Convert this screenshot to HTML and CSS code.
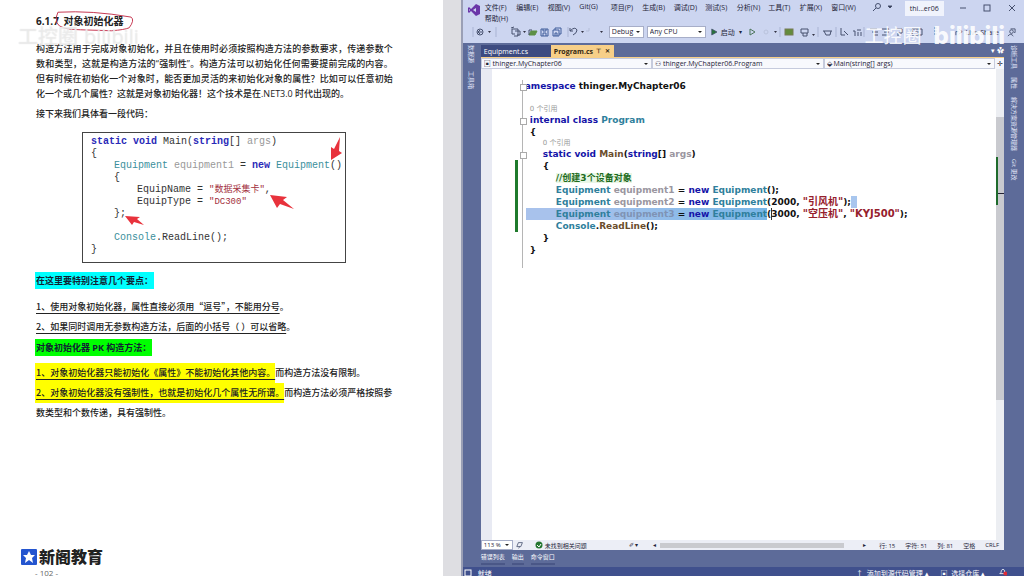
FILE: index.html
```html
<!DOCTYPE html>
<html lang="zh-CN">
<head>
    <meta charset="UTF-8">
    <meta name="viewport" content="width=device-width, initial-scale=1.0">
    <title>对象初始化器</title>
    <link rel="stylesheet" href="styles.css">
</head>
<body>
    <div class="screen">
        <article class="doc">
            <h2>6.1.7 <span class="circled">对象初始化器
                <svg class="pen" viewBox="0 0 82 22"><path d="M3 2 Q38 0 78 7 Q82 10 76 18 Q71 20 58 21 L26 20 Q5 20 2 13 Q0 7 3 2"/></svg></span>
            </h2>
            <p class="text">
                <span class="full">构造方法用于完成对象初始化，并且在使用时必须按照构造方法的参数要求，传递参数个</span>
                <span class="full">数和类型，这就是构造方法的“强制性”。构造方法可以初始化任何需要提前完成的内容。</span>
                <span class="full">但有时候在初始化一个对象时，能否更加灵活的来初始化对象的属性？比如可以任意初始</span>
                <span class="last">化一个或几个属性？这就是对象初始化器！这个技术是在.NET3.0 时代出现的。</span>
            </p>
            <p class="text">接下来我们具体看一段代码：</p>
            <div class="sample">
                <div><b>static</b> <b>void</b> Main(<b>string</b>[] <i>args</i>)</div>
                <div>{</div>
                <div class="in1"><em>Equipment</em> <i>equipment1</i> = <b>new</b> <em>Equipment</em>()</div>
                <div class="in1">{</div>
                <div class="in2">EquipName = <q>"数据采集卡"</q>,</div>
                <div class="in2">EquipType = <q>"DC300"</q></div>
                <div class="in1">};</div>
                <div>&nbsp;</div>
                <div class="in1"><em>Console</em>.ReadLine();</div>
                <div>}</div>
                <svg class="arrows" viewBox="0 0 262 128">
                    <path d="M248 27 L248 14 L251 16 L257 4 L256 18 L259 20 Z"/>
                    <path d="M187 62 L204 64 L200 67 L211 76 L197 71 L194 75 Z"/>
                    <path d="M42 83 L57 84 L54 86 L61 92 L51 89 L49 92 Z"/>
                </svg>
            </div>
            <h3><mark class="cyan">在这里要特别注意几个要点：</mark></h3>
            <p class="point"><u>1、使用对象初始化器，属性直接必须用“逗号”，不能用分号</u>。</p>
            <p class="point"><u>2、如果同时调用无参数构造方法，后面的小括号（ ）可以省略</u>。</p>
            <h3 class="pk"><mark class="green">对象初始化器 PK 构造方法：</mark></h3>
            <p class="point"><mark>1、对象初始化器只能初始化《属性》不能初始化其他内容。</mark>而构造方法没有限制。</p>
            <p class="point"><mark>2、对象初始化器没有强制性，也就是初始化几个属性无所谓。</mark>而构造方法必须严格按照参</p>
            <p class="point">数类型和个数传递，具有强制性。</p>
            <footer>
                <div class="brand">
                    <svg viewBox="0 0 16 16"><rect width="16" height="16" rx="1" fill="#2455cf"/><path d="M8 2 L10 6 L14 6 L11 9 L12 14 L8 11 L4 14 L5 9 L2 6 L6 6 Z" fill="#fff"/></svg>
                    新阁教育
                </div>
                <div class="page">- 102 -</div>
            </footer>
            <div class="ghost">工控圈 <span>bilibili</span></div>
        </article>

        <main class="ide">
            <header>
                <div class="menubar">
                    <svg class="logo" viewBox="0 0 12 12"><path d="M8 0 L12 2 V10 L8 12 L3 7 L1 9 L0 8 V4 L1 3 L3 5 Z M8 4 L5 6 L8 8 Z M1 5 V7 L2 6 Z" fill="#6a36a8" fill-rule="evenodd"/></svg>
                    <nav>
                        <button>文件(F)</button><button>编辑(E)</button><button>视图(V)</button><button>Git(G)</button><button>项目(P)</button><button>生成(B)</button><button>调试(D)</button><button>测试(S)</button><button>分析(N)</button><button>工具(T)</button><button>扩展(X)</button><button>窗口(W)</button><button>帮助(H)</button>
                    </nav>
                    <button class="search" aria-label="搜索"><svg viewBox="0 0 20 10"><circle cx="5" cy="4" r="2.5"/><path d="M3 6 L0 9"/><path d="M15 4h4l-2 2z" fill="#334"/></svg></button>
                    <span class="solution">thi...er06</span>
                    <div class="winbtns">
                        <button aria-label="最小化"><svg viewBox="0 0 8 8"><path d="M1 4H7"/></svg></button>
                        <button aria-label="最大化"><svg viewBox="0 0 8 8"><rect x="1" y="1" width="6" height="6"/></svg></button>
                        <button aria-label="关闭"><svg viewBox="0 0 8 8"><path d="M1 1L7 7M7 1L1 7"/></svg></button>
                    </div>
                </div>
                <div class="toolbar">
                    <svg class="tools-a" viewBox="0 0 132 14">
                        <path d="M2 2V12M25 2V12M97 2V12" stroke="#a9b3d3"/>
                        <circle cx="9" cy="7" r="3"/><path d="M7 7H11M7 7L9 5M7 7L9 9"/>
                        <path d="M17 6h3l-1.500 2zM52 6h3l-1.500 2zM110 6h3l-1.500 2zM129 6h3l-1.500 2z" fill="#334" stroke="none"/>
                        <path d="M41 4H47V11H43M41 4V9H44M44 6H49V10H46M40 3L43 2"/>
                        <path d="M58 10L60 6H66L64 10Z" fill="#5d8f45" stroke="#5d8f45"/><path d="M58 10V5H61"/>
                        <path d="M70 4H77V11H70ZM72 4V6H75V4M72 11V8H75V11" stroke="#3e5d9a"/>
                        <path d="M82 5H88V11H82ZM84 5V3H90V9H88M84 11V8H86V11" stroke="#3e5d9a"/>
                        <path d="M99 3V6H102M99 6Q104 1 106 5Q106 8 102 10"/>
                        <path d="M118 3V6H115" stroke="#b4bdd8"/>
                    </svg>
                    <span class="combo config"><select aria-label="配置"><option>Debug</option></select></span>
                    <span class="combo cpu"><select aria-label="平台"><option>Any CPU</option></select></span>
                    <button class="run"><svg viewBox="0 0 8 8"><path d="M1 0L8 4L1 8Z" fill="#26733a"/></svg>启动<small>▾</small></button>
                    <svg class="tools-b" viewBox="0 0 200 14">
                        <path d="M2 4L7 7L2 10Z" stroke="#4d765c"/><circle cx="18" cy="7" r="2" stroke="#bac3dc"/>
                        <path d="M26 6h3l-1.500 2zM64 9h3l-1.500 2z" fill="#334" stroke="none"/>
                        <path d="M32 2V12M70 2V12M88 2V12M116 2V12" stroke="#a9b3d3"/>
                        <rect x="37" y="4" width="8" height="6" fill="#638b3c" stroke="#777b55"/>
                        <path d="M53 4H60V8H53ZM55 8V11H59V8M76 6L78 10L82 10L83 6M75 6H84M93 3V10H97M96 6L100 10M105 6H107V11M109 5H113M110 7V11M113 7V11"/>
                        <path d="M122 4H129M124 7H130M126 10H130M134 4H141M136 7H141M134 10H140M148 4H154V8H150V11M164 4H174V10H164ZM167 7H171M186 3H189M186 6H189M186 9H189"/>
                    </svg>
                    <button class="share"><svg viewBox="0 0 10 10"><path d="M1 8V4H4M4 1L8 4L4 7"/></svg>Live Share</button>
                    <svg class="person" viewBox="0 0 10 10"><circle cx="5" cy="4" r="2"/><path d="M1 9Q4 5 7 9M4 1H9V5H8"/></svg>
                </div>
            </header>

            <div class="work">
                <aside class="side left"><button>数据源</button><button>工具箱</button></aside>
                <section class="center">
                    <div class="tabs">
                        <button class="tab">Equipment.cs</button>
                        <button class="tab active">Program.cs <span>⊤</span><span>✕</span></button>
                        <span class="tabtools">▾ ✿</span>
                    </div>
                    <div class="navbar">
                        <span class="combo"><select aria-label="项目"><option>▣ thinger.MyChapter06</option></select></span>
                        <span class="combo"><select aria-label="类型"><option>⚇ thinger.MyChapter06.Program</option></select></span>
                        <span class="combo"><select aria-label="成员"><option>⬙ Main(string[] args)</option></select></span>
                        <button class="split" aria-label="拆分">✛</button>
                    </div>
                    <div class="editor">
                        <div class="margin"></div>
                        <div class="code">
                            <div class="line fold"><b>amespace</b> thinger.MyChapter06</div>
                            <div class="line"></div>
                            <div class="lens in1">0 个引用</div>
                            <div class="line fold in1"><b>internal</b> <b>class</b> <em>Program</em></div>
                            <div class="line in1">{</div>
                            <div class="lens in2">0 个引用</div>
                            <div class="line fold in2"><b>static</b> <b>void</b> <s>Main</s>(<b>string</b>[] <i>args</i>)</div>
                            <div class="changed">
                                <div class="line in2">{</div>
                                <div class="line in3"><span class="comment">//创建3个设备对象</span></div>
                                <div class="line in3"><em>Equipment</em> <i>equipment1</i> = <b>new</b> <em>Equipment</em>();</div>
                                <div class="line in3"><em>Equipment</em> <i>equipment2</i> = <b>new</b> <em>Equipment</em>(2000, <q>"引风机"</q>);<span class="sel">&nbsp;&nbsp;</span></div>
                                <div class="line"><span class="sel from-start"><em>Equipment</em> <i>equipment3</i> = <b>new</b> <em>Equipment</em></span>(<span class="caret"></span>3000, <q>"空压机"</q>, <q>"KYJ500"</q>);</div>
                                <div class="line in3"><em>Console</em>.<s>ReadLine</s>();</div>
                            </div>
                            <div class="line in2">}</div>
                            <div class="line in1">}</div>
                            <div class="line"></div>
                        </div>
                        <div class="scroll"><div class="thumb"><div class="track-change"></div></div></div>
                    </div>
                    <div class="editbar">
                        <span class="combo zoom"><select aria-label="缩放"><option>113 %</option></select></span>
                        <svg viewBox="0 0 10 10"><path d="M3 2H8L6 7H1ZM5 7L3 9"/></svg>
                        <span class="ok"><svg viewBox="0 0 8 8"><circle cx="4" cy="4" r="3.500" fill="#24752f" stroke="none"/><path d="M2 4L4 6L6 3" stroke="#fff"/></svg>未找到相关问题</span>
                        <span class="brush">✐ ▾</span>
                        <span>◂</span><span class="hthumb"></span><span>▸</span>
                        <span class="pos"><span>行: 15</span><span>字符: 51</span><span>列: 81</span><span>空格</span><span>CRLF</span></span>
                    </div>
                    <div class="panels"><button>错误列表</button><button>输出</button><button>命令窗口</button></div>
                </section>
                <aside class="side right"><button>诊断工具</button><button>属性</button><button>解决方案资源管理器</button><button>Git 更改</button></aside>
            </div>

            <div class="status">
                <svg viewBox="0 0 8 8"><rect x="1" y="1" width="6" height="6"/></svg><span>就绪</span>
                <button class="repo">↑&nbsp; 添加到源代码管理 ▴</button>
                <button>▣&nbsp; 选择仓库 ▴</button>
                <span class="bell"><svg viewBox="0 0 10 10"><path d="M1 7Q3 6 3 3Q5 0 7 3V7Z"/><circle cx="8" cy="7" r="2.500" fill="#e02b35" stroke="none"/></svg></span>
            </div>
            <div class="watermark">工控圈 <strong>bilibili</strong></div>
        </main>
    </div>
</body>
</html>
```
FILE: styles.css
```css
* {
    box-sizing: border-box;
}
body {
    margin: 0;
    height: 100vh;
    overflow: hidden;
    font-family: "Open Sans", "Noto Sans CJK SC", sans-serif;
}
button, select {
    margin: 0;
    padding: 0;
    border: none;
    background: none;
    color: inherit;
    font: inherit;
    white-space: nowrap;
}
svg {
    flex: none;
    fill: none;
    stroke: #46506e;
}
.screen {
    display: flex;
    height: calc(100vh + 3px);
}

/* document */
.doc {
    position: relative;
    flex: 0 0 45%;
    min-width: 0;
    display: flex;
    flex-direction: column;
    padding: 14px 50px 0 36px;
    border-right: 18px solid #dedee2;
    background: #fff;
    color: #222;
    font-size: 9px;
    font-weight: 500;
    white-space: nowrap;
}
.doc h2 {
    margin: 0 0 12px;
    font-size: 10px;
    line-height: 15px;
}
.circled {
    position: relative;
    margin-left: 2px;
}
.pen {
    position: absolute;
    left: -8px;
    top: -4px;
    width: 80px;
    height: 22px;
    stroke: #c5354f;
}
.text {
    margin: 0 0 5px;
    line-height: 15px;
}
.text span {
    display: block;
}
.text .full {
    text-align-last: justify;
}
.sample {
    position: relative;
    width: 264px;
    margin: 6px 0 9px 46px;
    padding: 3px 8px 6px;
    border: 1px solid #444;
    color: #333;
    font: 10px/12px "Liberation Mono", "Noto Sans CJK SC", monospace;
}
.sample b {
    color: #2a2ab8;
}
.sample em {
    color: #3b8f9c;
    font-style: normal;
}
.sample i {
    color: #999;
    font-style: normal;
}
.sample q {
    color: #a33040;
    font-size: 9px;
}
q {
    quotes: none;
}
.sample .in1 {
    padding-left: 23px;
}
.sample .in2 {
    padding-left: 46px;
}
.arrows {
    position: absolute;
    left: 0;
    top: 0;
    width: 262px;
    height: 128px;
    fill: #e8323c;
    stroke: none;
}
.doc h3 {
    margin: 0 0 8px;
    font-size: 9px;
    line-height: 17px;
}
.doc h3 mark {
    display: inline-block;
    margin-left: -1px;
    padding: 0 1px;
    color: #123;
}
.doc .cyan {
    background: #0ff;
}
.doc .green {
    background: #0f0;
}
.doc .pk {
    margin: 2px 0 7px;
}
.point {
    margin: 0;
    font-family: "Noto Sans CJK SC", sans-serif;
    line-height: 20px;
}
.point u, .point mark {
    display: inline-block;
    color: inherit;
    text-decoration: underline;
    text-underline-offset: 3px;
}
.point mark {
    margin-left: -1px;
    padding-left: 1px;
    background: #ff0;
}
.doc footer {
    margin-top: auto;
    margin-left: -15px;
}
.brand {
    display: flex;
    align-items: center;
    gap: 2px;
    font-size: 16px;
    font-weight: 900;
    line-height: 20px;
}
.brand svg {
    width: 16px;
    height: 16px;
    stroke: none;
}
.page {
    padding-left: 14px;
    color: #666;
    font-size: 8px;
    line-height: 12px;
}
.ghost {
    position: absolute;
    left: 18px;
    top: 24px;
    display: flex;
    gap: 6px;
    color: rgba(255, 255, 255, 0.4);
    font-size: 20px;
    line-height: 26px;
    text-shadow: 0 0 1px #ddd;
}

/* IDE */
.ide {
    position: relative;
    flex: 1;
    min-width: 0;
    display: flex;
    flex-direction: column;
    border-left: 2px solid #9a9fb5;
    background: #5d6b99;
    color: #1e2438;
    font-size: 7px;
    white-space: nowrap;
}
header {
    height: 43px;
    background: #ccd5f0;
}
.menubar {
    display: flex;
    height: 24px;
    padding: 1px 8px 0 5px;
}
.logo {
    width: 12px;
    height: 12px;
    margin: 3px 5px 0 0;
    stroke: none;
}
nav {
    flex: 0 0 378px;
    display: grid;
    grid-template-columns: repeat(12, 1fr);
    grid-auto-rows: 11px;
}
nav button {
    text-align: left;
}
.search svg {
    width: 20px;
    height: 10px;
}
.search {
    margin: 0 12px 0 10px;
    height: 14px;
}
.solution {
    height: 15px;
    padding: 0 5px;
    background: #f0f3fc;
    line-height: 15px;
}
.winbtns {
    flex: 1;
    display: flex;
    justify-content: space-between;
    height: 15px;
    padding-left: 15px;
}
.winbtns svg {
    width: 8px;
    height: 8px;
}
.toolbar {
    display: flex;
    align-items: center;
    height: 16px;
    padding: 0 8px 0 8px;
}
.tools-a {
    width: 132px;
    height: 14px;
    margin-right: 6px;
}
.tools-b {
    width: 200px;
    height: 14px;
}
.combo {
    position: relative;
    display: block;
    border: 1px solid #a7aec8;
    background: #fff;
}
.combo::after {
    content: "";
    position: absolute;
    right: 3px;
    top: 40%;
    border: 2px solid transparent;
    border-top-color: #222;
}
.combo select {
    appearance: none;
    display: block;
    width: 100%;
    padding-left: 2px;
    line-height: 10px;
}
.toolbar .combo {
    flex: none;
    height: 12px;
}
.config {
    width: 35px;
}
.cpu {
    width: 59px;
    margin-left: 3px;
}
.run {
    display: flex;
    align-items: center;
    gap: 4px;
    margin: 0 6px 0 5px;
}
.run svg {
    width: 6px;
    height: 8px;
}
.run small {
    font-size: 6px;
}
.share {
    display: flex;
    align-items: center;
    gap: 2px;
    margin-left: auto;
}
.share svg, .person {
    width: 9px;
    height: 9px;
}
.person {
    margin-left: 8px;
}
.work {
    flex: 1;
    display: flex;
    min-height: 0;
}
.side {
    display: flex;
    flex-direction: column;
    gap: 8px;
    padding-top: 2px;
    color: #e4e9fa;
    font-size: 6px;
}
.side button {
    writing-mode: vertical-rl;
    text-orientation: sideways;
}
.left {
    width: 18px;
    align-items: center;
}
.right {
    width: 20px;
    align-items: center;
}
.center {
    flex: 1;
    min-width: 0;
    display: flex;
    flex-direction: column;
}
.tabs {
    display: flex;
    height: 14px;
    padding-top: 2px;
}
.tab {
    width: 70px;
    padding-left: 3px;
    background: #3d4b80;
    color: #fff;
    text-align: left;
}
.active {
    display: flex;
    align-items: center;
    justify-content: space-between;
    width: 63px;
    padding-right: 4px;
    background: #f7cf88;
    color: #332612;
    font-weight: 700;
}
.active span {
    font-size: 6px;
}
.tabtools {
    margin-left: auto;
    color: #fff;
}
.navbar {
    display: flex;
    height: 12px;
    border-top: 1px solid #f7cf88;
    background: #f4f6fc;
}
.navbar .combo {
    flex: 1;
    border-color: #c6cbdd;
    background: #f8f9fd;
}
.split {
    width: 9px;
}
.editor {
    flex: 1;
    display: flex;
    min-height: 0;
    background: #fff;
}
.margin {
    width: 11px;
    background: #e8eaf3;
}
.code {
    flex: 1;
    align-self: flex-start;
    margin: 11px 0 0 30px;
    border-left: 1px solid #b5b5b5;
    color: #111;
    font: 700 9px/12px "DejaVu Sans", "Noto Sans CJK SC", sans-serif;
}
.line {
    position: relative;
    height: 12px;
    padding-left: 2px;
}
.code .lens {
    color: #999;
    font-size: 7px;
    font-weight: 400;
    line-height: 10px;
}
.code .in1 {
    padding-left: 7px;
}
.code .in2 {
    padding-left: 20px;
}
.code .in3 {
    padding-left: 33px;
}
.fold::before {
    content: "";
    position: absolute;
    left: -3px;
    top: 4px;
    width: 5px;
    height: 5px;
    border: 1px solid #aaa;
    background: #fff;
}
.code b {
    color: #1414a8;
    font-weight: inherit;
}
.code em {
    color: #2f7f9c;
    font-style: normal;
}
.code i {
    color: #9a96a0;
    font-style: normal;
}
.code s {
    color: #6b4d2c;
    text-decoration: none;
}
.code q {
    color: #96202c;
    font-size: 10px;
    line-height: 10px;
}
.comment {
    background: #eaf7e6;
    color: #1d6b1d;
}
.changed {
    position: relative;
}
.changed::before {
    content: "";
    position: absolute;
    left: -8px;
    top: 0;
    bottom: 0;
    width: 3px;
    background: #1f7a2c;
}
.sel {
    display: inline-block;
    height: 12px;
    background: #a8c6ee;
}
.from-start {
    margin-left: 1px;
    padding-left: 30px;
    background: linear-gradient(90deg, #a8c2ec 20%, #78b6e6);
}
.from-start i {
    color: #7f93b4;
}
.caret {
    display: inline-block;
    width: 1px;
    height: 12px;
    margin-right: -1px;
    background: #333;
    vertical-align: top;
}
.scroll {
    width: 8px;
    padding-top: 48px;
    background: #eceef2;
}
.thumb {
    height: 67%;
    padding-top: 40px;
    background: #c9cacf;
}
.track-change {
    height: 48px;
    border-left: 2px solid #1f6b2c;
    background: linear-gradient(#223, #223) 0 36px / 8px 1px no-repeat;
}
.editbar {
    display: flex;
    align-items: center;
    height: 10px;
    background: #eceef6;
    font-size: 6px;
}
.editbar svg {
    width: 8px;
    height: 8px;
}
.zoom {
    width: 32px;
    height: 10px;
    margin-right: 3px;
}
.zoom select {
    line-height: 8px;
}
.ok {
    display: flex;
    align-items: center;
    gap: 2px;
    margin: 0 42px 0 11px;
}
.brush {
    margin-right: 15px;
}
.hthumb {
    flex: 1;
    height: 5px;
    margin: 0 19px 0 4px;
    background: #c9cacf;
}
.pos {
    display: flex;
    gap: 10px;
    margin: 0 5px 0 13px;
}
.panels {
    display: flex;
    gap: 7px;
    height: 17px;
    color: #fff;
    font-size: 6px;
}
.panels button {
    height: 15px;
    border-bottom: 2px solid #4a5787;
}
.status {
    display: flex;
    align-items: center;
    gap: 6px;
    height: 12px;
    padding: 0 17px 0 1px;
    background: #40508d;
    color: #fff;
}
.status svg {
    width: 8px;
    height: 8px;
    stroke: #fff;
}
.repo {
    margin: 0 6px 0 auto;
}
.bell {
    margin-left: 8px;
}
.watermark {
    position: absolute;
    right: 19px;
    top: 18px;
    display: flex;
    align-items: center;
    gap: 12px;
    color: rgba(255, 255, 255, 0.9);
    font-size: 19px;
    line-height: 36px;
}
.watermark strong {
    font: 800 24px/36px Inter, sans-serif;
}
```
